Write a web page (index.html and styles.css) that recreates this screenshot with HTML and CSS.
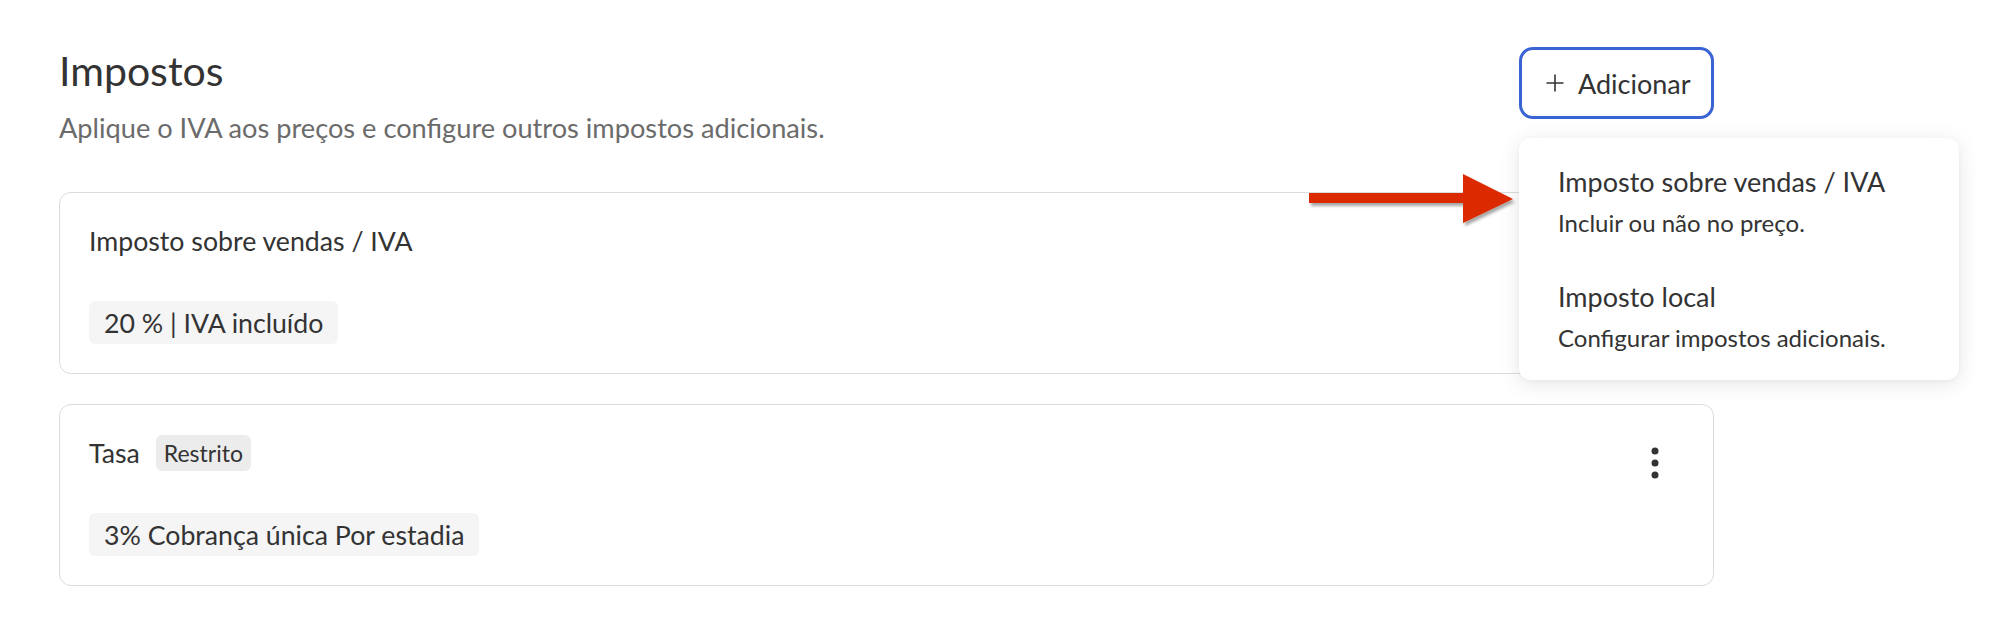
FILE: index.html
```html
<!DOCTYPE html>
<html lang="pt">
<head>
<meta charset="utf-8">
<title>Impostos</title>
<link rel="stylesheet" href="styles.css">
</head>
<body>
<main class="page">
  <header class="page-header">
    <div class="heading">
      <h1 class="title">Impostos</h1>
      <p class="subtitle">Aplique o IVA aos preços e configure outros impostos adicionais.</p>
    </div>
    <button class="add-btn" type="button">
      <svg class="plus" viewBox="0 0 18 18" width="18" height="18" aria-hidden="true"><path d="M9 0.5V17.5M0.5 9H17.5" stroke="#333" stroke-width="1.6" fill="none"/></svg>
      <span>Adicionar</span>
    </button>
  </header>

  <section class="cards">
    <article class="card">
      <div class="card-head">
        <span class="card-title">Imposto sobre vendas / IVA</span>
        <button class="kebab" type="button" aria-label="Mais">
          <svg viewBox="0 0 8 32" width="8" height="32"><circle cx="4" cy="4" r="3.5" fill="#333"/><circle cx="4" cy="16" r="3.5" fill="#333"/><circle cx="4" cy="28" r="3.5" fill="#333"/></svg>
        </button>
      </div>
      <div class="chip">20 % | IVA incluído</div>
    </article>

    <article class="card">
      <div class="card-head">
        <span class="card-title">Tasa</span>
        <span class="badge">Restrito</span>
        <button class="kebab" type="button" aria-label="Mais">
          <svg viewBox="0 0 8 32" width="8" height="32"><circle cx="4" cy="4" r="3.5" fill="#333"/><circle cx="4" cy="16" r="3.5" fill="#333"/><circle cx="4" cy="28" r="3.5" fill="#333"/></svg>
        </button>
      </div>
      <div class="chip">3% Cobrança única Por estadia</div>
    </article>
  </section>

  <div class="menu">
    <div class="menu-item">
      <div class="menu-title">Imposto sobre vendas / IVA</div>
      <div class="menu-desc">Incluir ou não no preço.</div>
    </div>
    <div class="menu-item">
      <div class="menu-title">Imposto local</div>
      <div class="menu-desc">Configurar impostos adicionais.</div>
    </div>
  </div>

  <svg class="arrow" viewBox="0 0 212 56" width="212" height="56" aria-hidden="true">
    <defs>
      <filter id="sh" x="-10%" y="-20%" width="130%" height="160%">
        <feDropShadow dx="2" dy="3" stdDeviation="1.6" flood-color="#000" flood-opacity="0.35"/>
      </filter>
    </defs>
    <path d="M0 20H154V1L204 26L154 50V30H0Z" fill="#dc2b06" filter="url(#sh)"/>
  </svg>
</main>
</body>
</html>
```

FILE: styles.css
```css
* { box-sizing: border-box; }

html, body {
  margin: 0;
  padding: 0;
  background: #ffffff;
}

body {
  font-family: Lato, "Open Sans", sans-serif;
  color: #333333;
}

.page {
  position: relative;
  width: 1714px;
  padding: 46px 0 0 59px;
}

.page-header {
  display: flex;
  justify-content: space-between;
  align-items: flex-start;
}

.title {
  margin: 0;
  font-size: 41px;
  font-weight: 400;
  line-height: 49px;
  color: #333333;
}

.subtitle {
  margin: 18px 0 0;
  font-size: 27.2px;
  line-height: 30px;
  color: #6b6b6b;
}

.add-btn {
  margin-top: 1px;
  height: 72px;
  width: 195px;
  display: flex;
  align-items: center;
  gap: 14px;
  padding: 0 0 0 24px;
  border: 3px solid #3a63d4;
  border-radius: 14px;
  background: #ffffff;
  font-family: inherit;
  font-size: 27px;
  color: #333333;
}

.plus { flex: none; }

.cards {
  margin-top: 49px;
  display: flex;
  flex-direction: column;
  gap: 30px;
}

.card {
  display: flex;
  flex-direction: column;
  align-items: flex-start;
  border: 1px solid #dcdcdc;
  border-radius: 12px;
  padding: 30px 29px 29px;
}

.card-head {
  align-self: stretch;
  display: flex;
  align-items: center;
  height: 36px;
  gap: 16px;
}

.card-title {
  font-size: 26.7px;
  line-height: 32px;
}

.badge {
  background: #ececec;
  border-radius: 6px;
  padding: 4px 8px;
  font-size: 23px;
  line-height: 28px;
}

.kebab {
  margin-left: auto;
  align-self: flex-start;
  width: 58px;
  height: 56px;
  margin-bottom: -20px;
  display: flex;
  align-items: center;
  justify-content: center;
  border: 0;
  background: transparent;
  padding: 0;
}

.chip {
  margin-top: 42px;
  background: #f5f5f5;
  border-radius: 6px;
  padding: 6px 15px 5px;
  font-size: 26.7px;
  line-height: 32px;
}

.menu {
  position: absolute;
  left: 1519px;
  top: 138px;
  width: 440px;
  padding: 6px 0;
  background: #ffffff;
  border-radius: 12px;
  box-shadow: 0 4px 22px rgba(0, 0, 0, 0.10), 0 1px 4px rgba(0, 0, 0, 0.04);
}

.menu-item {
  padding: 22px 39px;
}

.menu-title {
  font-size: 27px;
  line-height: 32px;
  color: #333333;
}

.menu-desc {
  margin-top: 10px;
  font-size: 24px;
  line-height: 29px;
  color: #333333;
}

.arrow {
  position: absolute;
  left: 1309px;
  top: 173px;
  overflow: visible;
}
```
